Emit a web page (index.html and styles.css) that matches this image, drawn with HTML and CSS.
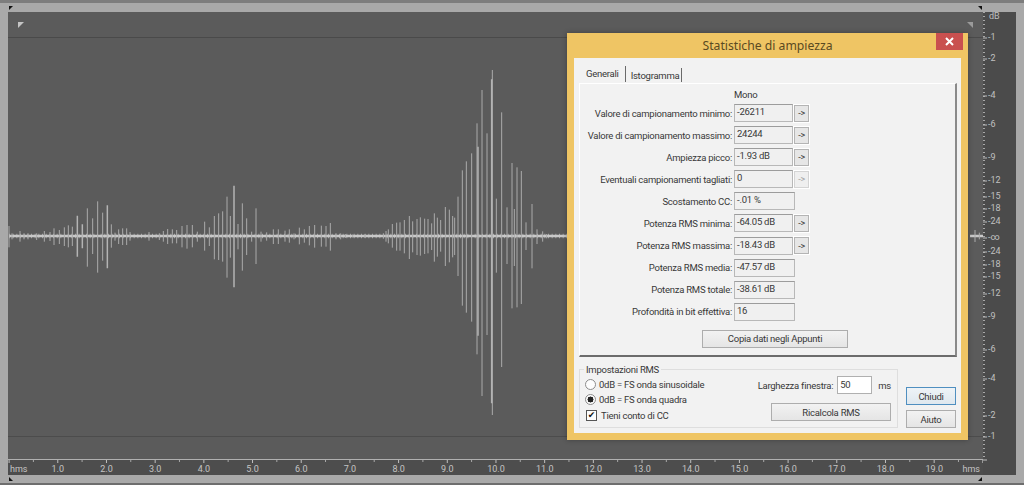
FILE: index.html
```html
<!DOCTYPE html>
<html>
    <head>
        <title>Statistiche di ampiezza</title>
        <meta charset="UTF-8" />
        <link rel="stylesheet" href="styles.css">
    </head>
    <body>
        <div class="top-edge"></div>
        <div class="editor">
            <div class="wave-column">
                <div class="wave-view">
                    <div class="wave-head">
                        <span class="marker marker-left"></span>
                        <span class="marker marker-right"></span>
                    </div>
                    <svg class="wave-canvas" viewBox="24 114 2925 1194">
                        <!-- values read off the trace, in 3x page units -->
                        <path class="wave-fuzz" d="M27 708H1701" />
                        <path class="wave-center" d="M27 708H1701M2910 708H2950" />
                        <g transform="translate(0 510)">
                            <path class="wave-bars" d="M27 168V232M36 190V208M60 183V215M72 190V208M84 190V208M110 190V210M133 183V215M150 186V213M162 175V225M178 180V222M193 172V228M205 166V232M217 170V228M262 115V290M278 145V252M293 94V308M308 128V272M334 163V233M345 188V212M356 178V222M368 175V225M380 175V225M390 186V212M447 186V212M478 190V210M490 183V215M503 177V222M517 178V220M530 180V220M546 168V232M561 165V236M577 165V232M592 185V215M614 155V242M628 172V228M643 138V268M656 130V270M668 124V275M681 80V323M691 138V263M714 162V238M727 100V302M740 145V255M755 185V215M768 115V282M783 185V215M800 187V212M820 178V222M835 178V222" />
                            <path class="wave-bars-thick" d="M232 137V260M247 163V235M322 106V295M702 47V352" />
                        </g>
                        <g transform="translate(840 180)">
                            <path class="wave-bars" d="M15 512V545M28 508V548M42 520V538M58 503V553M73 508V548M88 498V556M104 495V563M124 497V560M138 498V560M151 489V572M168 520V538M182 520V538M196 522V534M218 524V532M255 522V534M310 520V536M318 513V545M325 508V550M337 492V563M350 488V572M360 487V572M373 480V580M388 468V597M398 484V577M411 477V585M421 472V587M434 476V582M444 477V580M455 490V570M463 460V605M472 473V590M482 480V575M496 441V618M508 449V607M518 468V592M524 473V585M534 410V648M547 331V737M559 304V758M575 280V785M591 190V883M606 90V1008M621 220V825M637 30V1065M649 416V638M665 157V921M681 442V612M696 309V745M703 447V618M711 322V742M724 333V732M738 487V570M756 432V625M771 508V552M788 514V545M800 522V535" />
                            <path class="wave-bars-thick" d="M594 260V827M635 58V1030" />
                        </g>
                        <path class="wave-bars" d="M2925 690V726M2938 698V718" />
                    </svg>
                    <div class="wave-foot"></div>
                </div>
                <div class="time-scale">
                    <span class="time-unit">hms</span>
                    <div class="time-labels">
                        <span>1.0</span><span>2.0</span><span>3.0</span><span>4.0</span><span>5.0</span>
                        <span>6.0</span><span>7.0</span><span>8.0</span><span>9.0</span><span>10.0</span>
                        <span>11.0</span><span>12.0</span><span>13.0</span><span>14.0</span><span>15.0</span>
                        <span>16.0</span><span>17.0</span><span>18.0</span><span>19.0</span>
                    </div>
                    <span class="time-unit">hms</span>
                </div>
            </div>
            <svg class="level-scale" viewBox="0 0 33 463">
                <path class="level-minor" d="M1 0V448" />
                <path class="level-major" d="M0 26H4M0 47H4M0 84H4M0 113H4M0 146H4M0 169H4M0 185H4M0 197H4M0 210H4M0 226H4M0 240H4M0 253H4M0 265H4M0 282H4M0 305H4M0 338H4M0 367H4M0 404H4M0 425H4M0 448H4" />
                <text x="6" y="5">dB</text>
                <text x="5" y="26">-1</text>
                <text x="5" y="47">-2</text>
                <text x="5" y="84">-4</text>
                <text x="5" y="113">-6</text>
                <text x="5" y="146">-9</text>
                <text x="5" y="169">-12</text>
                <text x="5" y="185">-15</text>
                <text x="5" y="197">-18</text>
                <text x="5" y="210">-24</text>
                <text x="5" y="226">-∞</text>
                <text x="5" y="240">-24</text>
                <text x="5" y="253">-18</text>
                <text x="5" y="265">-15</text>
                <text x="5" y="282">-12</text>
                <text x="5" y="305">-9</text>
                <text x="5" y="338">-6</text>
                <text x="5" y="367">-4</text>
                <text x="5" y="404">-2</text>
                <text x="5" y="425">-1</text>
            </svg>
        </div>
        <div class="bottom-edge"></div>
        <span class="corner corner-tl"></span>
        <span class="corner corner-tr"></span>
        <span class="corner corner-bl"></span>
        <span class="corner corner-br"></span>

        <div class="dialog">
            <div class="dialog-title">
                <span class="dialog-name">Statistiche di ampiezza</span>
                <button class="close-button">
                    <svg width="9" height="9" viewBox="0 0 9 9"><path d="M1 1L8 8M8 1L1 8" /></svg>
                </button>
            </div>
            <div class="dialog-body">
                <div class="tabs">
                    <span class="tab tab-active">Generali</span>
                    <span class="tab">Istogramma</span>
                </div>
                <div class="tab-panel">
                    <div class="channel-name">Mono</div>
                    <div class="stat-row">
                        <span class="stat-label">Valore di campionamento minimo:</span>
                        <span class="stat-value">-26211</span>
                        <button class="jump-button">-&gt;</button>
                    </div>
                    <div class="stat-row">
                        <span class="stat-label">Valore di campionamento massimo:</span>
                        <span class="stat-value">24244</span>
                        <button class="jump-button">-&gt;</button>
                    </div>
                    <div class="stat-row">
                        <span class="stat-label">Ampiezza picco:</span>
                        <span class="stat-value">-1.93 dB</span>
                        <button class="jump-button">-&gt;</button>
                    </div>
                    <div class="stat-row">
                        <span class="stat-label">Eventuali campionamenti tagliati:</span>
                        <span class="stat-value">0</span>
                        <button class="jump-button jump-disabled">-&gt;</button>
                    </div>
                    <div class="stat-row">
                        <span class="stat-label">Scostamento CC:</span>
                        <span class="stat-value stat-wide">-.01 %</span>
                    </div>
                    <div class="stat-row">
                        <span class="stat-label">Potenza RMS minima:</span>
                        <span class="stat-value">-64.05 dB</span>
                        <button class="jump-button">-&gt;</button>
                    </div>
                    <div class="stat-row">
                        <span class="stat-label">Potenza RMS massima:</span>
                        <span class="stat-value">-18.43 dB</span>
                        <button class="jump-button">-&gt;</button>
                    </div>
                    <div class="stat-row">
                        <span class="stat-label">Potenza RMS media:</span>
                        <span class="stat-value stat-wide">-47.57 dB</span>
                    </div>
                    <div class="stat-row">
                        <span class="stat-label">Potenza RMS totale:</span>
                        <span class="stat-value stat-wide">-38.61 dB</span>
                    </div>
                    <div class="stat-row">
                        <span class="stat-label">Profondità in bit effettiva:</span>
                        <span class="stat-value stat-wide">16</span>
                    </div>
                    <button class="push-button copy-button">Copia dati negli Appunti</button>
                </div>
                <div class="bottom-section">
                    <fieldset class="rms-group">
                        <legend>Impostazioni RMS</legend>
                        <div class="rms-options">
                            <label class="option"><input type="radio" name="rms-mode" />0dB = FS onda sinusoidale</label>
                            <label class="option"><input type="radio" name="rms-mode" checked />0dB = FS onda quadra</label>
                            <label class="option option-check"><input type="checkbox" checked />Tieni conto di CC</label>
                        </div>
                        <div class="rms-window">
                            <div class="window-row">
                                <span>Larghezza finestra:</span>
                                <span class="window-value">50</span>
                                <span>ms</span>
                            </div>
                            <button class="push-button recalc-button">Ricalcola RMS</button>
                        </div>
                    </fieldset>
                    <div class="dialog-buttons">
                        <button class="push-button default-button">Chiudi</button>
                        <button class="push-button">Aiuto</button>
                    </div>
                </div>
            </div>
        </div>
    </body>
</html>
```

FILE: styles.css
```css
body {
    margin: 0;
    height: 485px;
    overflow: hidden;
    background-color: #a9a9a9;
    font-family: Roboto, "Liberation Sans", sans-serif;
    font-size: 9.5px;
    letter-spacing: -0.25px;
    color: #383838;
}
button {
    font-family: inherit;
    font-size: inherit;
    letter-spacing: inherit;
    color: inherit;
    padding: 0;
}
.top-edge {
    height: 3px;
    background-color: #7d7d7d;
}
.bottom-edge {
    height: 2px;
    margin-top: 8px;
    background-color: #6e6e6e;
}
.editor {
    display: flex;
    width: 1008px;
    height: 463px;
    margin: 9px 8px 0;
}
.wave-column {
    display: flex;
    flex-direction: column;
    width: 975px;
}
.wave-view {
    display: flex;
    flex-direction: column;
    flex: 1;
    background-color: #5b5b5b;
}
.wave-head {
    display: flex;
    justify-content: space-between;
    align-items: center;
    height: 25px;
    padding: 0 10px;
    border-bottom: 1px solid #4a4a4a;
    box-sizing: content-box;
}
.wave-foot {
    height: 22px;
    border-top: 1px solid #4c4c4c;
}
.wave-canvas {
    display: block;
    width: 975px;
    height: 398px;
    filter: blur(0.35px);
}
.wave-center {
    fill: none;
    stroke: #c8c8c8;
    stroke-width: 7;
}
.wave-fuzz {
    fill: none;
    stroke: #a4a4a4;
    stroke-width: 14;
    stroke-dasharray: 3 8;
}
.wave-bars {
    fill: none;
    stroke: #ababab;
    stroke-width: 3;
}
.wave-bars-thick {
    fill: none;
    stroke: #b4b4b4;
    stroke-width: 4.5;
}
.marker {
    width: 0;
    height: 0;
    border-style: solid;
    border-width: 3.5px;
}
.marker-left {
    border-color: #c4c4c4 transparent transparent #c4c4c4;
}
.marker-right {
    border-color: #9a9a9a #9a9a9a transparent transparent;
}
.time-scale {
    display: flex;
    justify-content: space-between;
    align-items: center;
    height: 16px;
    box-sizing: border-box;
    padding: 3px 3px 0 2px;
    border-top: 1px solid #b0b0b0;
    background-color: #4d4d4d;
    background-image: linear-gradient(to right, #c0c0c0 1px, transparent 1px),
        linear-gradient(to right, #a8a8a8 1px, transparent 1px);
    background-size: 48.7px 3px, 48.7px 2px;
    background-position: 0.6px 0, 24.9px 0;
    background-repeat: repeat-x;
    color: #c4c4c4;
    font-size: 9px;
    letter-spacing: 0;
}
.time-labels {
    display: flex;
    margin-left: 2px;
}
.time-labels span {
    width: 48.7px;
    text-align: center;
}
.level-scale {
    display: block;
    width: 33px;
    height: 463px;
    background-color: #4b4b4b;
}
.level-minor {
    fill: none;
    stroke: #a8a8a8;
    stroke-width: 2;
    stroke-dasharray: 1 3;
}
.level-major {
    fill: none;
    stroke: #bdbdbd;
    stroke-width: 1;
}
.level-scale text {
    fill: #c0c0c0;
    font-size: 9px;
    letter-spacing: 0;
    dominant-baseline: middle;
}
.corner {
    position: absolute;
    width: 0;
    height: 0;
    border-style: solid;
    border-width: 2.5px;
}
.corner-tl {
    left: 9px;
    top: 6px;
    border-color: #111 transparent transparent #111;
}
.corner-tr {
    left: 978px;
    top: 6px;
    border-color: #111 #111 transparent transparent;
}
.corner-bl {
    left: 9px;
    top: 477px;
    border-color: transparent transparent #111 #111;
}
.corner-br {
    left: 978px;
    top: 477px;
    border-color: transparent #111 #111 transparent;
}
.dialog {
    position: absolute;
    left: 567px;
    top: 33px;
    display: flex;
    flex-direction: column;
    width: 401px;
    height: 407px;
    box-sizing: border-box;
    padding: 0 7px 7px;
    background-color: #efc564;
    box-shadow: 0 0 5px rgba(0, 0, 0, 0.3);
}
.dialog-title {
    display: flex;
    justify-content: center;
    align-items: center;
    position: relative;
    height: 25px;
    flex-shrink: 0;
}
.dialog-name {
    font-family: "Noto Sans", sans-serif;
    font-size: 12.2px;
    letter-spacing: 0;
    color: #5a4a22;
}
.close-button {
    display: flex;
    justify-content: center;
    align-items: center;
    position: absolute;
    right: -2px;
    top: 0;
    width: 27px;
    height: 17px;
    border: none;
    background-color: #c9504f;
}
.close-button path {
    fill: none;
    stroke: #fff;
    stroke-width: 2;
}
.dialog-body {
    flex: 1;
    padding: 8px 5px 0;
    background-color: #f2f2f2;
}
.tabs {
    display: flex;
    height: 17px;
    padding-left: 7px;
}
.tab {
    display: flex;
    align-items: center;
    height: 14px;
    margin-top: 2px;
    padding: 0 2px 0 5px;
    border-right: 1px solid #6a6a6a;
}
.tab-active {
    height: 16px;
    margin-top: 0;
    padding: 0 6px 2px 0;
    box-sizing: border-box;
}
.tab-panel {
    width: 378px;
    height: 274px;
    box-sizing: border-box;
    padding-top: 4px;
    border-top: 1px solid #fff;
    border-left: 1px solid #fff;
    border-right: 2px solid #8a8a8a;
    border-bottom: 2px solid #6c6c6c;
}
.channel-name {
    height: 16px;
    line-height: 14px;
    padding-left: 154px;
}
.stat-row {
    display: flex;
    align-items: center;
    height: 18px;
    margin-bottom: 4.1px;
}
.stat-label {
    width: 152px;
    margin-right: 2px;
    text-align: right;
    white-space: nowrap;
}
.stat-value {
    width: 59px;
    height: 18px;
    box-sizing: border-box;
    padding-left: 2px;
    line-height: 14px;
    border: 1px solid #b8b8b8;
    border-top-color: #9c9c9c;
    background-color: #f0f0f0;
}
.stat-wide {
    width: 61px;
}
.jump-button {
    width: 15px;
    height: 17px;
    margin-left: 1px;
    font-size: 9px;
    border: 1px solid #b4b4b4;
    outline: 1px solid #fff;
    background-color: #e6e6e6;
}
.jump-disabled {
    border-color: #d4d4d4;
    background-color: #efefef;
    color: #a4a4a4;
}
.push-button {
    display: block;
    height: 18px;
    border: 1px solid #adadad;
    background: linear-gradient(#f2f2f2, #e5e5e5);
}
.copy-button {
    width: 146px;
    margin: 9px 0 0 122px;
}
.bottom-section {
    display: flex;
    align-items: flex-end;
    gap: 8px;
}
.rms-group {
    display: flex;
    justify-content: space-between;
    width: 319px;
    height: 65px;
    box-sizing: border-box;
    margin: 6px 0 0;
    padding: 0 6px 0 5px;
    border: 1px solid #dedede;
}
.rms-group legend {
    height: 13px;
    line-height: 13px;
    padding: 0 2px;
    margin-left: -1px;
}
.rms-options {
    display: flex;
    flex-direction: column;
    padding-top: 1px;
}
.option {
    display: flex;
    align-items: center;
    height: 15px;
    gap: 3px;
}
.option-check {
    margin-top: 1px;
    gap: 4px;
    padding-left: 1px;
}
.option input {
    appearance: none;
    width: 11px;
    height: 11px;
    margin: 0;
    border: 1px solid #8c8c8c;
    border-radius: 50%;
    background-color: #fdfdfd;
}
.option input[type="radio"]:checked {
    background: radial-gradient(circle, #222 0 2.8px, #fdfdfd 3.2px);
}
.option input[type="checkbox"] {
    display: flex;
    justify-content: center;
    align-items: center;
    border-color: #555;
    border-radius: 0;
}
.option input[type="checkbox"]:checked::after {
    content: "✔";
    font-family: "DejaVu Sans", sans-serif;
    font-size: 9px;
    line-height: 9px;
    color: #111;
}
.rms-window {
    display: flex;
    flex-direction: column;
    align-items: flex-end;
    gap: 9px;
}
.window-row {
    display: flex;
    align-items: center;
    gap: 4px;
    height: 18px;
}
.window-value {
    width: 35px;
    height: 18px;
    box-sizing: border-box;
    margin-right: 2px;
    padding-left: 2px;
    line-height: 15px;
    border: 1px solid #b0b0b0;
    background-color: #fff;
}
.recalc-button {
    width: 120px;
}
.dialog-buttons {
    display: flex;
    flex-direction: column;
    gap: 5px;
}
.dialog-buttons button {
    width: 50px;
}
.default-button {
    border-color: #4f8fc0;
    background: linear-gradient(#eef3f7, #dfe8ef);
}
```
